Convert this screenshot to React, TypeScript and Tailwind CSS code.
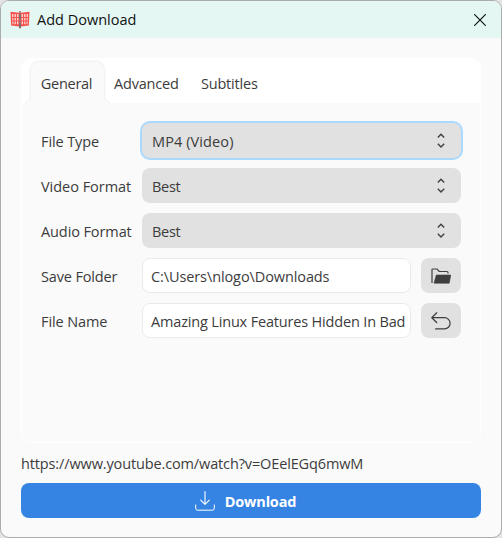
import React from "react";

function AppLogo() {
  return (
    <svg className="block" width="20" height="18" viewBox="0 0 20 18" fill="none">
      <path d="M0.5 0.8L9 1.8H11L19.5 0.8 18.9 14.4 11 15.6H9L1.1 14.4Z" fill="#f4524e" />
      <path
        d="M2 3h1.4v3H2zM4.5 3h1.4v3H4.5zM7 3h1.4v3H7zM2.3 7h1.1v2.5H2.3zM4.5 7h1.4v2.5H4.5zM7 7h1.4v2.5H7zM2.3 10.6h1.1v2.6H2.3zM4.5 10.6h1.4v2.6H4.5zM7 10.6h1.4v2.6H7zM11.6 3H13v3h-1.4zM14.1 3h1.4v3h-1.4zM16.6 3H18v3h-1.4zM11.6 7H13v2.5h-1.4zM14.1 7h1.4v2.5h-1.4zM16.6 7h1.1v2.5h-1.1zM11.6 10.6H13v2.6h-1.4zM14.1 10.6h1.4v2.6h-1.4zM16.6 10.6h1.1v2.6h-1.1z"
        fill="#fbd3cf"
      />
      <path d="M10 0v17.5" stroke="#b06a6a" strokeWidth="1.6" />
      <path d="M10 4v4M10 12v5" stroke="#6f7474" strokeWidth="1.6" />
    </svg>
  );
}

function Chevrons() {
  return (
    <svg className="block" width="8" height="16" viewBox="0 0 8 16" fill="none" stroke="#3f3f3f" strokeWidth="1.4">
      <path d="M0.8 4.5L4 1.3l3.2 3.2M0.8 10.7L4 13.9l3.2-3.2" />
    </svg>
  );
}

function FolderIcon() {
  return (
    <svg className="block" width="20" height="16" viewBox="0 0 20 16" fill="none">
      <path d="M1 15V1.7Q1 1 1.7 1H6l2.2 2.5H16Q17 3.5 17 4.5V5.5" stroke="#3f3f3f" strokeWidth="1.2" />
      <path d="M5.3 7H19.8L18.2 15.2H3Z" fill="#3f3f3f" stroke="#3f3f3f" strokeWidth="0.6" strokeLinejoin="round" />
    </svg>
  );
}

function UndoIcon() {
  return (
    <svg className="block" width="20" height="18" viewBox="0 0 20 18" fill="none" stroke="#3f3f3f" strokeWidth="1.25" strokeLinecap="round" strokeLinejoin="round">
      <path d="M5.7 0.8L0.8 5.7l4.9 4.8M0.8 5.7H13.5a5.6 5.6 0 0 1 0 11.2H4.6" />
    </svg>
  );
}

function DownloadIcon() {
  return (
    <svg className="block" width="20" height="20" viewBox="0 0 20 20" fill="none" stroke="#ffffff" strokeLinecap="round" strokeLinejoin="round">
      <path d="M10 0.6V13M5.7 9.2L10 13.4l4.3-4.2" strokeWidth="1.1" />
      <path d="M0.7 14v3.2Q0.7 19.2 2.7 19.2H17.3Q19.3 19.2 19.3 17.2V14" strokeWidth="1" />
    </svg>
  );
}

function Row({ label, spacing, children }: { label: string; spacing: string; children: React.ReactNode }) {
  return (
    <div className="flex h-[35px] items-center">
      <div className={`w-[101px] shrink-0 whitespace-nowrap pt-0.5 ${spacing}`}>{label}</div>
      {children}
    </div>
  );
}

function Select({ value, spacing, focused }: { value: string; spacing: string; focused?: boolean }) {
  return (
    <div className={`flex h-[35px] w-[319px] items-center justify-between rounded-lg bg-[#e1e1e1] pl-2.5 pr-4 ${focused ? "ring-2 ring-[#aad9ff]" : ""}`}>
      <span className={`pt-0.5 ${spacing}`}>{value}</span>
      <Chevrons />
    </div>
  );
}

function Field({ value, spacing }: { value: string; spacing: string }) {
  return (
    <div className="flex h-[35px] w-[269px] items-center overflow-hidden rounded-lg border border-[#e9e9e9] bg-white pl-2">
      <span className={`whitespace-nowrap pt-0.5 ${spacing}`}>{value}</span>
    </div>
  );
}

function IconButton({ children }: { children: React.ReactNode }) {
  return <button className="ml-2.5 flex h-[35px] w-10 items-center justify-center rounded-lg bg-[#e1e1e1]">{children}</button>;
}

export default function App() {
  return (
    <div className="h-[538px] w-[502px] bg-[#e4e4e4] font-['Open_Sans',sans-serif] text-[14.5px] leading-5 text-[#3c3c3c]">
      <div className="flex h-full flex-col overflow-hidden rounded-[9px] border border-[#acacac] bg-[#fafafa]">
        <header className="flex h-[37px] shrink-0 items-center bg-[#e4f7f3] pl-[9px] pr-[15px] text-[#111111]">
          <AppLogo />
          <span className="ml-[7px]">Add Download</span>
          <svg className="ml-auto" width="12" height="12" viewBox="0 0 12 12" stroke="#111111" strokeWidth="1.2">
            <path d="M0.3 0.3l11.4 11.4M11.7 0.3L0.3 11.7" />
          </svg>
        </header>

        <main className="flex flex-col px-5 pt-5">
          <section className="flex h-[385px] flex-col overflow-hidden rounded-[10px] border-[1.5px] border-white">
            <nav className="flex h-11 shrink-0 bg-white pl-[9px]">
              <div className="relative mt-[3px] flex w-[73px] items-center justify-center rounded-t-lg bg-[#fafafa] pr-0.5 pt-0.5 shadow-[0_0_3px_#dcdcdc]">
                <span className="tracking-[-0.3px]">General</span>
                <svg className="absolute -left-[6px] bottom-0" width="8" height="8" viewBox="0 0 8 8">
                  <path d="M0 0H6Q6 8 0 8Z" fill="#ffffff" />
                  <path d="M0 8Q6 7 6 0H8V8Z" fill="#fafafa" />
                  <path d="M0 7.5Q5.5 7 5.5 0" fill="none" stroke="#eeeeee" />
                </svg>
                <svg className="absolute -right-[6px] bottom-0" width="8" height="8" viewBox="0 0 8 8">
                  <path d="M8 0H2Q2 8 8 8Z" fill="#ffffff" />
                  <path d="M8 8Q2 7 2 0H0V8Z" fill="#fafafa" />
                  <path d="M8 7.5Q2.5 7 2.5 0" fill="none" stroke="#eeeeee" />
                </svg>
              </div>
              <div className="ml-[10px] w-[87px] whitespace-nowrap pt-[15px] tracking-[-0.2px]">Advanced</div>
              <div className="whitespace-nowrap pt-[15px] tracking-[-0.2px]">Subtitles</div>
            </nav>
            <div className="relative flex grow flex-col gap-2.5 bg-[#fafafa] pl-[19px] pt-5">
              <Row label="File Type" spacing="tracking-[-0.1px]">
                <Select value="MP4 (Video)" spacing="tracking-[0.1px]" focused />
              </Row>
              <Row label="Video Format" spacing="tracking-[-0.03px]">
                <Select value="Best" spacing="tracking-[-0.3px]" />
              </Row>
              <Row label="Audio Format" spacing="tracking-[-0.1px]">
                <Select value="Best" spacing="tracking-[-0.3px]" />
              </Row>
              <Row label="Save Folder" spacing="tracking-[-0.15px]">
                <Field value="C:\Users\nlogo\Downloads" spacing="tracking-[-0.1px]" />
                <IconButton><FolderIcon /></IconButton>
              </Row>
              <Row label="File Name" spacing="tracking-[-0.1px]">
                <Field value="Amazing Linux Features Hidden In Bad" spacing="tracking-[-0.17px]" />
                <IconButton><UndoIcon /></IconButton>
              </Row>
            </div>
          </section>
          <div className="mt-[11px] whitespace-nowrap tracking-[-0.13px]">https://www.youtube.com/watch?v=OEelEGq6mwM</div>
          <button className="mt-[9px] flex h-[35px] items-center justify-center gap-2.5 rounded-lg bg-[#3584e4] pr-[11px] text-white">
            <DownloadIcon />
            <span className="pt-0.5 font-bold tracking-[-0.2px]">Download</span>
          </button>
        </main>
      </div>
    </div>
  );
}
